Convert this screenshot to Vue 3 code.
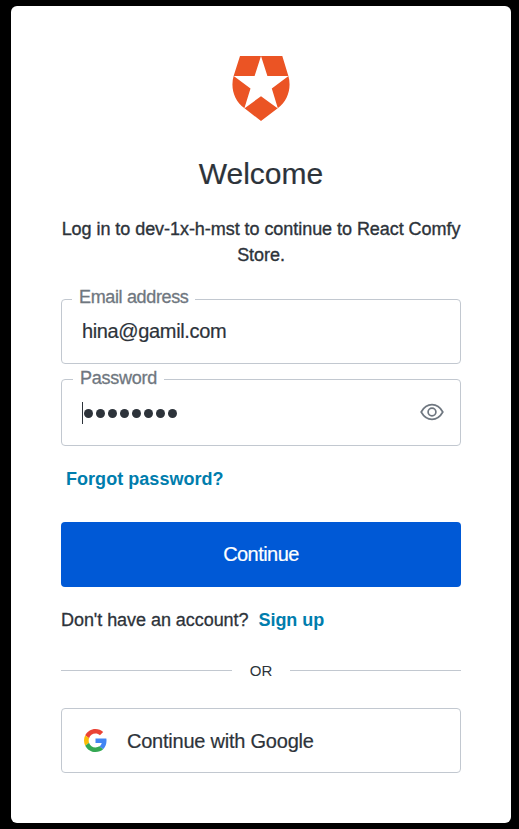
<script setup>
import { ref } from 'vue'

const email = ref('hina@gamil.com')
const passwordLength = 8
</script>

<template>
  <main class="page">
    <section class="card">
      <svg class="logo" viewBox="0 0 58 65" width="58" height="65" aria-hidden="true">
        <path fill="#eb5424" d="M8 0H50.3L56.3 19.7C59.8 31.5 56 44.5 45.7 52.3L29 65L12.5 52.3C2 44.5 -1.800 31.5 1.700 19.700Z" />
        <path fill="#fff" d="M29 0L35.4 19.900H56.500L39.800 32.500L45.900 52.500L29 40.200L12.300 52.500L18.500 32.500L1.700 19.900H22.600Z" />
      </svg>
      <h1>Welcome</h1>
      <p class="intro"><span>Log in to dev-1x-h-mst to continue to React Comfy</span> <span>Store.</span></p>

      <div class="field email">
        <label>Email address</label>
        <span class="value">{{ email }}</span>
      </div>

      <div class="field password">
        <label>Password</label>
        <span class="secret"><i class="caret"></i><i v-for="n in passwordLength" :key="n" class="dot"></i></span>
        <svg class="eye" viewBox="0 0 24 18" width="24" height="18" fill="none" stroke="#6f7780" stroke-width="1.700">
          <path d="M1.200 9C3.800 4.300 7.400 1.700 12 1.700S20.200 4.300 22.800 9C20.200 13.700 16.600 16.300 12 16.300S3.800 13.700 1.200 9Z" />
          <circle cx="12" cy="9" r="3.900" />
        </svg>
      </div>

      <a class="forgot">Forgot password?</a>
      <button class="primary">Continue</button>
      <p class="signup"><span>Don't have an account?</span><a>Sign up</a></p>
      <div class="divider"><span>OR</span></div>
      <button class="google">
        <svg viewBox="0 0 48 48" width="23" height="23" aria-hidden="true">
          <path fill="#ea4335" d="M24 9.500c3.540 0 6.710 1.220 9.210 3.600l6.850-6.850C35.900 2.380 30.470 0 24 0 14.620 0 6.510 5.380 2.560 13.220l7.980 6.190C12.430 13.720 17.740 9.500 24 9.500z" />
          <path fill="#4285f4" d="M46.980 24.550c0-1.570-.15-3.090-.38-4.550H24v9.020h12.940c-.58 2.960-2.260 5.480-4.780 7.180l7.730 6c4.510-4.180 7.090-10.360 7.090-17.650z" />
          <path fill="#fbbc05" d="M10.530 28.590c-.48-1.450-.76-2.990-.76-4.590s.27-3.140.76-4.590l-7.980-6.190C.92 16.460 0 20.120 0 24s.92 7.540 2.560 10.780l7.970-6.190z" />
          <path fill="#34a853" d="M24 48c6.480 0 11.930-2.130 15.890-5.810l-7.730-6c-2.150 1.450-4.920 2.300-8.160 2.300-6.260 0-11.570-4.220-13.470-9.910l-7.980 6.190C6.510 42.620 14.620 48 24 48z" />
        </svg>
        <span>Continue with Google</span>
      </button>
    </section>
  </main>
</template>

<style>
body {
  margin: 0;
  background: #000;
}
</style>

<style scoped>
* {
  box-sizing: border-box;
}
.page {
  height: 829px;
  padding: 6px 8px 6px 11px;
  background: #000;
  font-family: "Liberation Sans", Arial, sans-serif;
  font-size: 18px;
  color: #2d333a;
  overflow: hidden;
}
.card {
  display: flex;
  flex-direction: column;
  height: 817px;
  padding: 50px;
  background: #fff;
  border-radius: 6px;
}
.logo {
  align-self: center;
  flex: none;
}
h1 {
  margin: 35px 0 0;
  font-size: 30px;
  line-height: 36px;
  font-weight: 400;
  text-align: center;
  -webkit-text-stroke: 0.2px;
}
.intro {
  margin: 24px 0 0;
  line-height: 26px;
  letter-spacing: -0.05px;
  text-align: center;
  white-space: nowrap;
  -webkit-text-stroke: 0.35px;
}
.intro span {
  display: block;
}
.field {
  display: flex;
  flex: none;
  align-items: center;
  position: relative;
  padding: 0 16px 0 20px;
  border: 1px solid #c2c8d0;
  border-radius: 4px;
}
.email {
  height: 65px;
  margin-top: 31px;
}
.password {
  height: 67px;
  margin-top: 15px;
}
.field label {
  position: absolute;
  top: -12px;
  left: 10px;
  height: 20px;
  padding-left: 7px;
  background: #fff;
  color: #6f7780;
  line-height: 20px;
  white-space: nowrap;
  -webkit-text-stroke: 0.3px;
}
.email label {
  top: -13px;
  width: 123px;
  letter-spacing: -0.35px;
}
.password label {
  left: 11px;
  width: 91px;
  letter-spacing: -0.25px;
}
.value {
  font-size: 20px;
  letter-spacing: -0.36px;
  -webkit-text-stroke: 0.2px;
}
.secret {
  display: flex;
  align-items: center;
  flex: 1;
  gap: 3px;
}
.caret {
  width: 1px;
  height: 22px;
  margin-right: -2px;
  background: #2d333a;
}
.dot {
  width: 9px;
  height: 9px;
  margin-top: 1px;
  border-radius: 50%;
  background: #2d333a;
}
.eye {
  flex: none;
  margin-bottom: 2px;
}
a {
  color: #007dad;
  font-weight: 700;
}
.forgot {
  margin: 23px 0 0 5px;
  line-height: 20px;
  letter-spacing: 0.04px;
  align-self: flex-start;
}
button {
  display: flex;
  flex: none;
  align-items: center;
  height: 65px;
  padding: 0;
  border: 0;
  border-radius: 4px;
  font: 20px "Liberation Sans", Arial, sans-serif;
  -webkit-text-stroke: 0.2px;
}
.primary {
  justify-content: center;
  margin-top: 33px;
  background: #0059d6;
  color: #fff;
  letter-spacing: -0.55px;
}
.signup {
  display: flex;
  gap: 10px;
  margin: 23px 0 0;
  line-height: 20px;
  letter-spacing: -0.05px;
  white-space: nowrap;
}
.signup span {
  -webkit-text-stroke: 0.3px;
}
.divider {
  display: flex;
  align-items: center;
  height: 20px;
  margin-top: 30px;
  font-size: 15px;
}
.divider::before,
.divider::after {
  content: "";
  flex: 1;
  height: 1px;
  background: #c2c8d0;
}
.divider span {
  width: 58px;
  text-align: center;
}
.google {
  gap: 20px;
  margin-top: 28px;
  padding-left: 22px;
  border: 1px solid #c2c8d0;
  background: #fff;
  color: #2d333a;
  letter-spacing: -0.23px;
}
.google span {
  padding-top: 2px;
}
</style>
